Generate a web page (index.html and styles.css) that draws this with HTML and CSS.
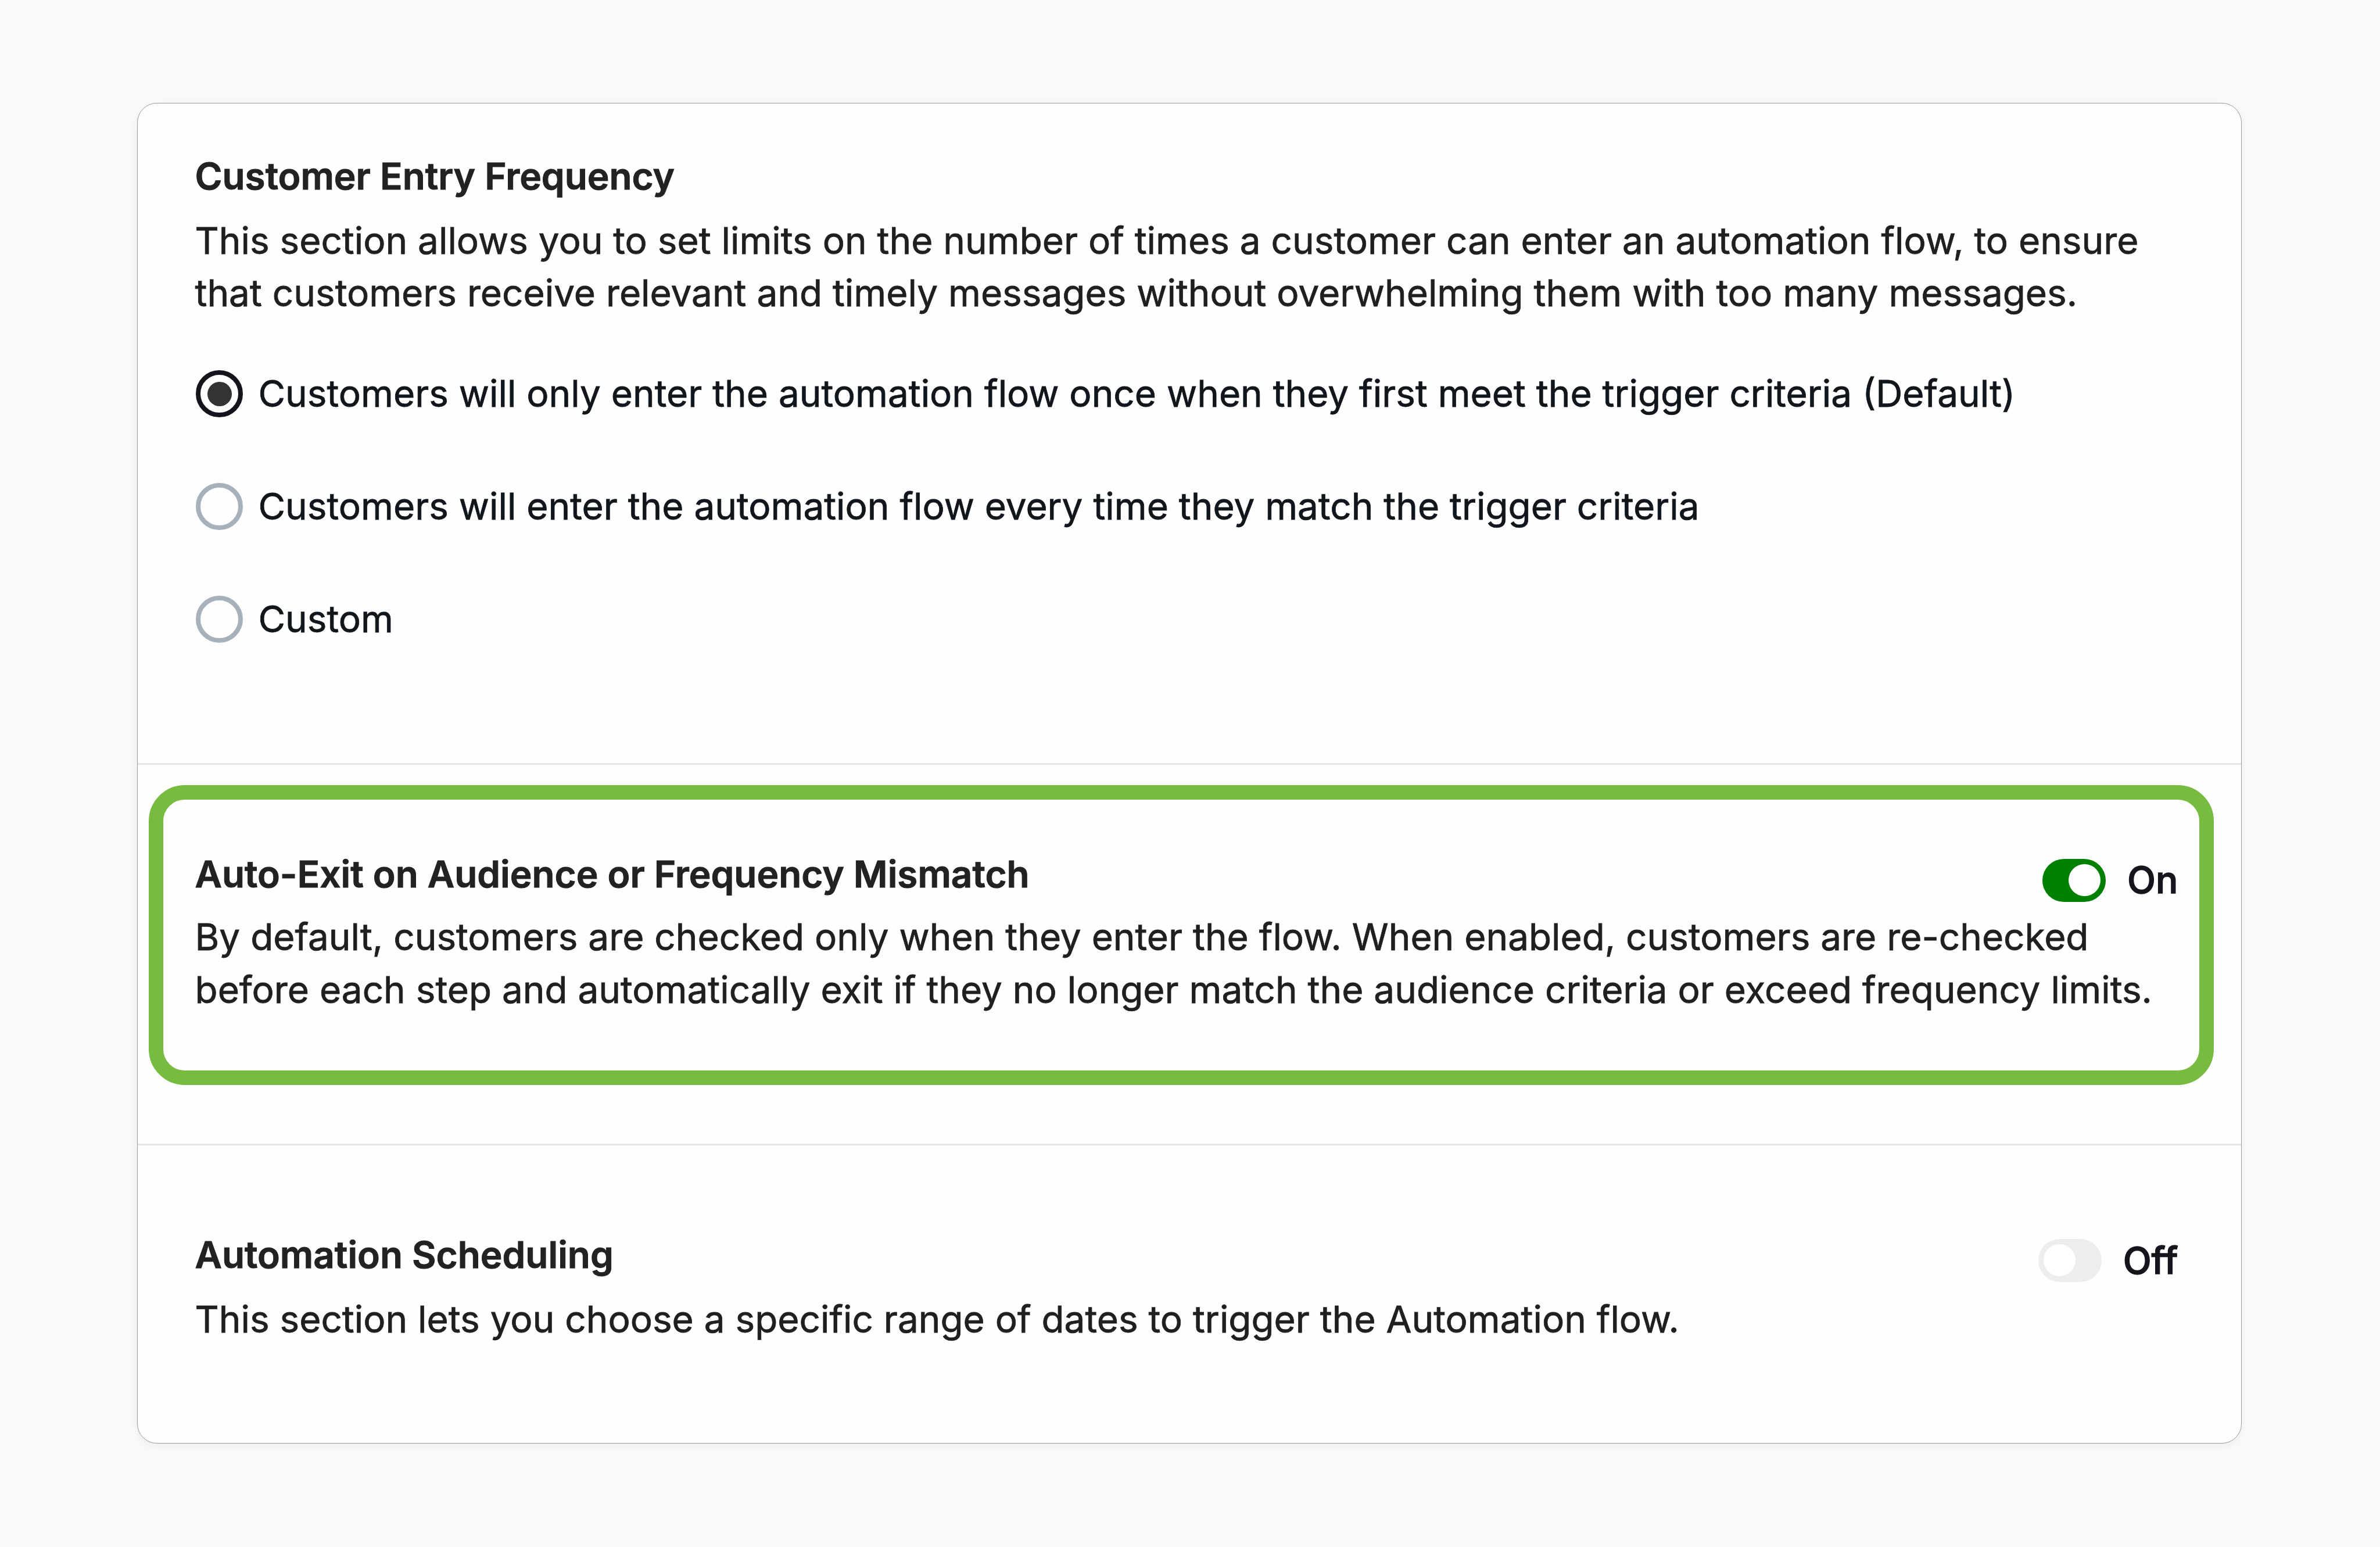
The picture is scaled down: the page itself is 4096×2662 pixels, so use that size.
FILE: index.html
```
<!DOCTYPE html>
<html lang="en">
<head>
    <meta charset="UTF-8">
    <meta name="viewport" content="width=device-width, initial-scale=1.0">
    <title>Automation Settings</title>
    <link rel="stylesheet" href="styles.css">
</head>
<body>
    <div class="card">
        <!-- Entry frequency -->
        <section class="section frequency">
            <h2>Customer Entry Frequency</h2>
            <p>This section allows you to set limits on the number of times a customer can enter an automation flow, to ensure<br>that customers receive relevant and timely messages without overwhelming them with too many messages.</p>
            <div class="radio-group">
                <label class="radio-row">
                    <input type="radio" name="frequency" class="radio" checked>
                    <span>Customers will only enter the automation flow once when they first meet the trigger criteria (Default)</span>
                </label>
                <label class="radio-row">
                    <input type="radio" name="frequency" class="radio">
                    <span>Customers will enter the automation flow every time they match the trigger criteria</span>
                </label>
                <label class="radio-row">
                    <input type="radio" name="frequency" class="radio">
                    <span>Custom</span>
                </label>
            </div>
        </section>

        <!-- Auto exit -->
        <section class="section auto-exit">
            <div class="highlight">
                <div class="section-header">
                    <h2>Auto-Exit on Audience or Frequency Mismatch</h2>
                    <div class="toggle">
                        <span class="switch on"><span class="knob"></span></span>
                        <span class="toggle-label">On</span>
                    </div>
                </div>
                <p>By default, customers are checked only when they enter the flow. When enabled, customers are re-checked<br>before each step and automatically exit if they no longer match the audience criteria or exceed frequency limits.</p>
            </div>
        </section>

        <!-- Scheduling -->
        <section class="section scheduling">
            <div class="section-header">
                <h2>Automation Scheduling</h2>
                <div class="toggle">
                    <span class="switch"><span class="knob"></span></span>
                    <span class="toggle-label">Off</span>
                </div>
            </div>
            <p>This section lets you choose a specific range of dates to trigger the Automation flow.</p>
        </section>
    </div>
</body>
</html>
```

FILE: styles.css
```
* {
    box-sizing: border-box;
}
body {
    margin: 0;
    padding: 177px 238px 0 236px;
    height: 2662px;
    overflow: hidden;
    background-color: #f9f9f9;
    color: #1f1f1f;
    font-family: Inter, "Liberation Sans", sans-serif;
    font-size: 63.82px;
    line-height: 90.6px;
    -webkit-text-stroke: 0.8px currentColor;
}
h2, p {
    margin: 0;
    font-size: inherit;
    white-space: nowrap;
}
h2 {
    font-weight: 600;
    color: #222;
    -webkit-text-stroke-width: 1px;
}
.card {
    height: 2307px;
    background-color: #fefefe;
    border: 1px solid #9c9c9c;
    border-radius: 34px;
    box-shadow: 0 4px 14px rgba(0, 0, 0, 0.05);
}
.section {
    border-bottom: 3px solid #e6e6e6;
}
.section:last-child {
    border-bottom: none;
}

/* Entry frequency */
.frequency {
    height: 1138px;
    padding: 79.6px 99px 0 98.5px;
}
.frequency h2 {
    margin-bottom: 20.6px;
}
.radio-group {
    display: flex;
    flex-direction: column;
    gap: 103.4px;
    margin-top: 82.4px;
}
.radio-row {
    display: flex;
    align-items: center;
    gap: 26.5px;
    color: #10161b;
    white-space: nowrap;
}
.radio {
    appearance: none;
    display: grid;
    place-content: center;
    flex: none;
    width: 81px;
    height: 81px;
    margin: 0 0 0 1.5px;
    border: 8px solid #a7b1bb;
    border-radius: 50%;
}
.radio:checked {
    border-color: #14141c;
}
.radio:checked::before {
    content: "";
    width: 42px;
    height: 42px;
    border-radius: 50%;
    background-color: #333;
}

/* Auto exit */
.auto-exit {
    height: 655px;
    padding: 35px 46.6px 0 19.4px;
}
.highlight {
    height: 516px;
    padding: 83.2px 37px 0 54.2px;
    border: 25px solid #77bc41;
    border-radius: 62px;
}
.highlight .section-header {
    margin-bottom: 17.5px;
}

/* Scheduling */
.scheduling {
    padding: 142.8px 108.5px 0 98.5px;
}
.scheduling .section-header {
    margin-bottom: 20.4px;
}

.section-header {
    display: flex;
    justify-content: space-between;
    align-items: flex-start;
    height: 90.6px;
}
.toggle {
    display: flex;
    align-items: center;
    gap: 36.7px;
    margin-top: 10.3px;
}
.toggle-label {
    font-weight: 500;
    color: #15151d;
    -webkit-text-stroke-width: 1.4px;
}
.switch {
    display: flex;
    width: 109px;
    height: 74px;
    padding: 9px;
    border-radius: 37px;
    background-color: #ededef;
}
.switch.on {
    justify-content: flex-end;
    background-color: #008000;
}
.knob {
    width: 55px;
    height: 55px;
    border-radius: 50%;
    background-color: #fff;
}
```
